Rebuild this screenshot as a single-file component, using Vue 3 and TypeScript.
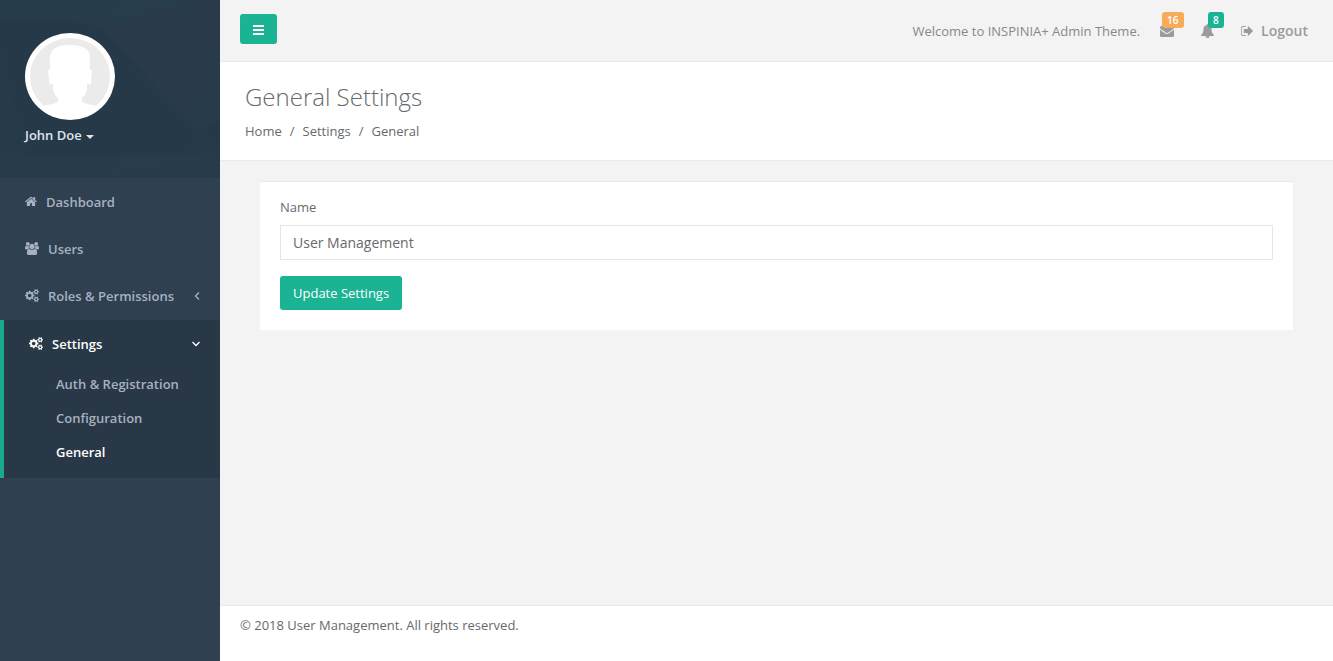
<script setup lang="ts">
import { ref } from 'vue'

interface Icon {
  box: string
  width: number
  d: string
}

interface NavItem {
  label: string
  icon: Icon
  chevron?: 'left' | 'down'
  children?: { label: string; active?: boolean }[]
}

const outerCog =
  'v140q0 16-149 31-12 27-30 52 51 113 51 138 0 4-4 7-122 71-124 71-8 0-46-47t-52-68q-20 2-30 2t-30-2q-14 21-52 68t-46 47q-2 0-124-71-4-3-4-7 0-25 51-138-18-25-30-52-149-15-149-31v-140q0-16 149-31 13-29 30-52-51-113-51-138 0-4 4-7 4-2 35-20t59-34 30-16q8 0 46 46.5t52 67.5q20-2 30-2t30 2q51-71 92-112l6-2q4 0 124 70 4 3 4 7 0 25-51 138 17 23 30 52 149 15 149 31z'

const home: Icon = {
  box: '64 0 1664 1792',
  width: 12,
  d: 'M1472 992v480q0 26-19 45t-45 19h-384v-384h-256v384h-384q-26 0-45-19t-19-45v-480q0-1 .5-3t.5-3l575-474 575 474q1 2 1 6zm223-69l-62 74q-8 9-21 11h-3q-13 0-21-7l-692-577-692 577q-12 8-24 7-13-2-21-11l-62-74q-8-10-7-23.5t11-21.5l719-599q32-26 76-26t76 26l244 204v-195q0-14 9-23t23-9h192q14 0 23 9t9 23v408l219 182q10 8 11 21.5t-7 23.5z',
}

const users: Icon = {
  box: '-64 0 1920 1792',
  width: 14,
  d: 'M529 896q-162 5-265 128h-134q-82 0-138-40.5t-56-118.5q0-353 124-353 6 0 43.5 21t97.5 42.5 119 21.5q67 0 133-23-5 37-5 66 0 139 81 256zm1071 637q0 120-73 189.5t-194 69.5h-874q-121 0-194-69.5t-73-189.5q0-53 3.5-103.5t14-109 26.5-108.5 43-97.5 62-81 85.5-53.5 111.5-20q10 0 43 21.5t73 48 107 48 135 21.5 135-21.5 107-48 73-48 43-21.5q61 0 111.5 20t85.5 53.5 62 81 43 97.5 26.5 108.5 14 109 3.5 103.5zm-1024-1277q0 106-75 181t-181 75-181-75-75-181 75-181 181-75 181 75 75 181zm704 384q0 159-112.5 271.5t-271.5 112.5-271.5-112.5-112.5-271.5 112.5-271.5 271.5-112.5 271.5 112.5 112.5 271.5zm576 225q0 78-56 118.5t-138 40.5h-134q-103-123-265-128 81-117 81-256 0-29-5-66 66 23 133 23 59 0 119-21.5t97.5-42.5 43.5-21q124 0 124 353zm-128-609q0 106-75 181t-181 75-181-75-75-181 75-181 181-75 181 75 75 181z',
}

const cogs: Icon = {
  box: '-64 0 1920 1792',
  width: 14,
  d:
    'M832 896q0-106-75-181t-181-75-181 75-75 181 75 181 181 75 181-75 75-181zm768 512q0-52-38-90t-90-38-90 38-38 90q0 53 37.5 90.5t90.5 37.5 90.5-37.5 37.5-90.5zm0-1024q0-52-38-90t-90-38-90 38-38 90q0 53 37.5 90.5t90.5 37.5 90.5-37.5 37.5-90.5zm-384 421v185q0 10-7 19.5t-16 10.5l-155 24q-11 35-32 76 34 48 90 115 7 11 7 20 0 12-7 19-23 30-82.5 89.5t-78.5 59.5q-11 0-21-7l-115-90q-37 19-77 31-11 108-23 155-7 24-30 24h-186q-11 0-20-7.5t-10-17.5l-23-153q-34-10-75-31l-118 89q-7 7-20 7-11 0-21-8-144-133-144-160 0-9 7-19 10-14 41-53t47-61q-23-44-35-82l-152-24q-10-1-17-9.5t-7-19.5v-185q0-10 7-19.5t16-10.5l155-24q11-35 32-76-34-48-90-115-7-11-7-20 0-12 7-20 22-30 82-89t79-59q11 0 21 7l115 90q34-18 77-32 11-108 23-154 7-24 30-24h186q11 0 20 7.5t10 17.5l23 153q34 10 75 31l118-89q8-7 20-7 11 0 21 8 144 133 144 160 0 8-7 19-12 16-42 54t-45 60q23 48 34 82l152 23q10 2 17 10.5t7 19.5z' +
    `M1856 1338${outerCog}M1856 314${outerCog}`,
}

const navItems: NavItem[] = [
  { label: 'Dashboard', icon: home },
  { label: 'Users', icon: users },
  { label: 'Roles & Permissions', icon: cogs, chevron: 'left' },
  {
    label: 'Settings',
    icon: cogs,
    chevron: 'down',
    children: [
      { label: 'Auth & Registration' },
      { label: 'Configuration' },
      { label: 'General', active: true },
    ],
  },
]

const name = ref('User Management')
</script>

<template>
  <div class="app">
    <aside class="sidebar">
      <div class="profile">
        <svg class="facets" viewBox="0 0 220 178" preserveAspectRatio="none" aria-hidden="true">
          <path fill="#293b4a" d="M100 27L120 0H220V120L198 132Z" />
          <path fill="#283d4c" d="M100 27L120 0H205L165 10Z" />
          <path fill="#273c4a" d="M0 0H120L100 27L60 20L0 18Z" />
          <path fill="#283b4a" d="M220 42L210 62L198 132L220 120Z" />
          <path fill="#273a49" d="M0 45L28 155H0Z" />
          <path fill="#283a49" d="M198 132L220 145V155H185Z" />
          <path fill="#283b4a" d="M0 155H220V178H0Z" />
          <path fill="#293c4b" d="M120 155H220L165 166L105 178Z" />
        </svg>
        <svg class="avatar" viewBox="0 0 90 87" role="img" aria-label="John Doe">
          <ellipse cx="45" cy="43.5" rx="45" ry="43.5" fill="#fff" />
          <ellipse cx="45" cy="43.5" rx="40" ry="38.5" fill="#ebebeb" />
          <path
            fill="#fff"
            d="M25 37V25Q25 12 45 12Q65 12 65 25V37H67L66 51H62V56Q61 62 57 65V69Q62 71 71 72.500Q60 82 45 82Q30 82 19 72.500Q29 71 33 69V65Q29 62 28 56V51H24.500L23 37Z"
          />
        </svg>
        <button type="button" class="user">John Doe<span class="caret"></span></button>
      </div>
      <nav>
        <ul class="menu">
          <li v-for="item in navItems" :key="item.label" :class="{ open: item.children }">
            <a href="#" class="link">
              <svg :viewBox="item.icon.box" :width="item.icon.width" height="13" aria-hidden="true">
                <path :d="item.icon.d" />
              </svg>
              <span>{{ item.label }}</span>
              <svg v-if="item.chevron" class="chevron" viewBox="0 0 8 8" width="8" height="8" aria-hidden="true">
                <path v-if="item.chevron === 'left'" d="M7 .500L3.500 4L7 7.500" />
                <path v-else d="M.500 2L4 5.500L7.500 2" />
              </svg>
            </a>
            <ul v-if="item.children" class="submenu">
              <li v-for="child in item.children" :key="child.label">
                <a href="#" :class="{ current: child.active }">{{ child.label }}</a>
              </li>
            </ul>
          </li>
        </ul>
      </nav>
    </aside>

    <div class="page">
      <header class="topbar">
        <button type="button" class="btn toggle" aria-label="Toggle navigation">
          <svg viewBox="0 0 12 13" width="12" height="13" aria-hidden="true">
            <path d="M0 2h11v2H0zM0 6h11v2H0zM0 10h11v2H0z" />
          </svg>
        </button>
        <span class="welcome">Welcome to INSPINIA+ Admin Theme.</span>
        <a href="#" class="counter" aria-label="Messages">
          <svg viewBox="0 0 1792 1792" width="14" height="14" aria-hidden="true">
            <path
              d="M1792 710v794q0 66-47 113t-113 47h-1472q-66 0-113-47t-47-113v-794q44 49 101 87 362 246 497 345 57 42 92.5 65.5t94.5 48 110 24.5h2q51 0 110-24.5t94.5-48 92.5-65.5q170-123 498-345 57-39 100-87zm0-294q0 79-49 151t-122 123q-376 261-468 325-10 7-42.5 31t-54 38.5-52 32.5-57.5 27-50 9h-2q-23 0-50-9t-57.5-27-52-32.5-54-38.5-42.5-31q-91-64-262-182.5t-205-142.5q-62-42-117-115.5t-55-136.5q0-78 41.5-130t118.5-52h1472q65 0 112.5 47t47.5 113z"
            />
          </svg>
          <span class="badge warning">16</span>
        </a>
        <a href="#" class="counter" aria-label="Alerts">
          <svg viewBox="64 0 1664 1792" width="13" height="14" aria-hidden="true">
            <path
              d="M912 1696q0-16-16-16-59 0-101.5-42.5t-42.5-101.5q0-16-16-16t-16 16q0 73 51.5 124.5t124.5 51.5q16 0 16-16zm816-288q0 52-38 90t-90 38h-448q0 106-75 181t-181 75-181-75-75-181h-448q-52 0-90-38t-38-90q50-42 91-88t85-119.5 74.5-158.5 50-206 19.5-260q0-152 117-282.5t307-158.5q-8-19-8-39 0-40 28-68t68-28 68 28 28 68q0 20-8 39 190 28 307 158.5t117 282.5q0 139 19.5 260t50 206 74.5 158.5 85 119.5 91 88z"
            />
          </svg>
          <span class="badge primary">8</span>
        </a>
        <a href="#" class="logout">
          <svg viewBox="96 0 1664 1792" width="13" height="14" aria-hidden="true">
            <path
              d="M704 1440q0 4 1 20t.5 26.5-3 23.5-10 19.5-20.5 6.5h-320q-119 0-203.5-84.5t-84.5-203.5v-704q0-119 84.5-203.5t203.5-84.5h320q13 0 22.5 9.5t9.5 22.5q0 4 1 20t.5 26.5-3 23.5-10 19.5-20.5 6.5h-320q-66 0-113 47t-47 113v704q0 66 47 113t113 47h312l11.5 1 11.5 3 8 5.5 7 9 2 13.5zm928-544q0 26-19 45l-544 544q-19 19-45 19t-45-19-19-45v-288h-448q-26 0-45-19t-19-45v-384q0-26 19-45t45-19h448v-288q0-26 19-45t45-19 45 19l544 544q19 19 19 45z"
            />
          </svg>
          Logout
        </a>
      </header>

      <section class="heading">
        <h2>General Settings</h2>
        <ol class="breadcrumb">
          <li><a href="#">Home</a></li>
          <li><a href="#">Settings</a></li>
          <li><a href="#">General</a></li>
        </ol>
      </section>

      <main class="content">
        <form class="card" @submit.prevent>
          <label for="name">Name</label>
          <input id="name" v-model="name" type="text" />
          <button type="submit" class="btn">Update Settings</button>
        </form>
      </main>

      <footer class="footer">© 2018 User Management. All rights reserved.</footer>
    </div>
  </div>
</template>

<style>
body {
  margin: 0;
  background: #2f4050;
}
</style>

<style scoped>
.app {
  display: flex;
  min-height: 100vh;
  font: 13px/20px 'Open Sans', 'Noto Sans', sans-serif;
  color: #676a6c;
}

.app * {
  box-sizing: border-box;
}

ul,
ol {
  margin: 0;
  padding: 0;
  list-style: none;
}

a {
  color: inherit;
  text-decoration: none;
}

svg {
  display: block;
  flex: none;
  fill: currentColor;
}

.sidebar {
  flex: none;
  width: 220px;
  background: #2f4050;
  color: #a7b1c2;
  font-weight: 600;
}

.profile {
  position: relative;
  padding: 33px 25px;
  background: #263949;
}

.facets {
  position: absolute;
  inset: 0;
  width: 100%;
  height: 100%;
}

.avatar {
  position: relative;
  width: 90px;
}

.user {
  position: relative;
  display: flex;
  align-items: center;
  gap: 4px;
  margin-top: 5px;
  padding: 0;
  border: 0;
  background: none;
  color: #dfe4ed;
  font: inherit;
}

.caret {
  margin-top: 3px;
  border: 4px solid transparent;
  border-top-color: currentColor;
  border-bottom: 0;
}

.link {
  display: flex;
  align-items: center;
  gap: 9px;
  height: 47px;
  padding: 0 20px 0 25px;
}

.chevron {
  margin-left: auto;
  fill: none;
  stroke: currentColor;
  stroke-width: 1.3;
}

.open {
  margin-top: 1px;
  padding-bottom: 9px;
  border-left: 4px solid #19aa8d;
  background: #293846;
}

.open .link,
.submenu .current {
  color: #fff;
}

.submenu a {
  display: block;
  padding: 7px 10px 7px 52px;
}

.page {
  display: flex;
  flex: 1;
  flex-direction: column;
  min-width: 0;
  background: #f3f3f4;
}

.topbar {
  display: flex;
  align-items: center;
  height: 62px;
  padding: 0 25px 0 20px;
  border-bottom: 1px solid #e7eaec;
  color: #999c9e;
}

.btn {
  height: 34px;
  padding: 0 13px;
  border: 0;
  border-radius: 3px;
  background: #1ab394;
  color: #fff;
  font: inherit;
}

.toggle {
  height: 30px;
  margin-bottom: 4px;
  padding: 1px 12px 0 13px;
}

.welcome {
  margin-left: auto;
  margin-right: 20px;
  color: #888;
}

.counter {
  position: relative;
  margin-right: 27px;
}

.badge {
  position: absolute;
  top: -12px;
  left: 2px;
  padding: 0 5px;
  border-radius: 3px;
  color: #fff;
  font-size: 10px;
  font-weight: 600;
  line-height: 16px;
}

.warning {
  background: #f8ac59;
}

.primary {
  left: 7px;
  background: #1ab394;
}

.logout {
  display: flex;
  align-items: center;
  gap: 7px;
  font-size: 14px;
  font-weight: 600;
}

.heading {
  padding: 20px 25px 19px;
  border-bottom: 1px solid #e7eaec;
  background: #fff;
}

h2 {
  margin: 0 0 9px;
  font-size: 24px;
  font-weight: 300;
  line-height: 30px;
}

.breadcrumb {
  display: flex;
}

.breadcrumb li + li::before {
  content: '/';
  padding: 0 8px;
}

.content {
  flex: 1;
  padding: 20px 40px;
}

.card {
  padding: 15px 20px 20px;
  border-top: 1px solid #e7eaec;
  background: #fff;
}

label {
  display: block;
  margin-bottom: 8px;
}

input {
  display: block;
  width: 100%;
  height: 35px;
  margin-bottom: 16px;
  padding: 0 12px;
  border: 1px solid #e5e6e7;
  background: #fff;
  color: inherit;
  font: inherit;
  font-size: 14px;
}

.footer {
  padding: 9px 20px 26px;
  border-top: 1px solid #e7eaec;
  background: #fff;
}
</style>
